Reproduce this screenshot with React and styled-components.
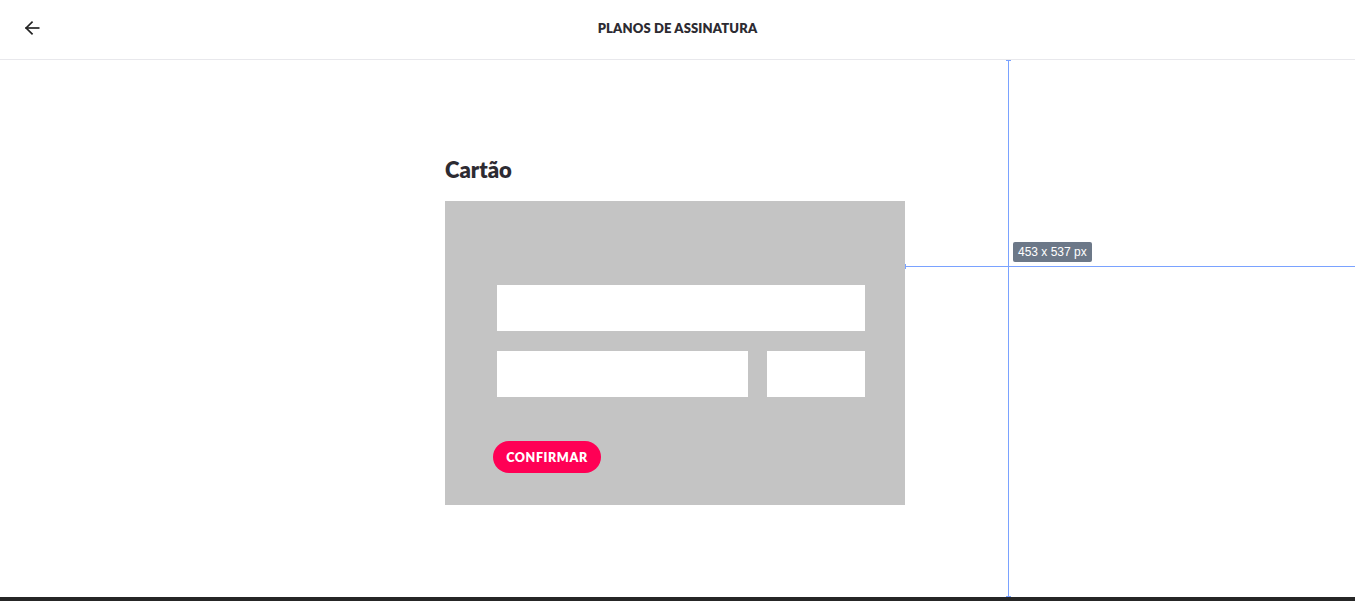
import React from 'react';
import styled, { createGlobalStyle } from 'styled-components';

const GlobalStyle = createGlobalStyle`
  html, body {
    margin: 0;
    padding: 0;
    background: #fff;
  }
  body {
    font-family: Lato, "Open Sans", sans-serif;
    color: #2d2b32;
  }
`;

// whole window
const Page = styled.div`
  position: relative;
  width: 1355px;
  height: 601px;
  display: flex;
  flex-direction: column;
  overflow: hidden;
`;

// topo com voltar + titulo
const Header = styled.header`
  height: 60px;
  box-sizing: border-box;
  padding-bottom: 3px;
  border-bottom: 1px solid #e8e8ec;
  display: grid;
  grid-template-columns: 64px 1fr 64px;
  align-items: center;
`;

const BackButton = styled.button`
  border: 0;
  background: none;
  padding: 0 0 0 22px;
  display: flex;
  align-items: center;
  cursor: pointer;
  color: #222;
`;

const Title = styled.h1`
  margin: 0;
  text-align: center;
  font-size: 13px;
  font-weight: 800;
  letter-spacing: 0.15px;
  color: #2d2b32;
`;

const Main = styled.main`
  flex: 1;
  display: flex;
  justify-content: center;
  padding-top: 98px;
  padding-right: 5px;
`;

const Section = styled.section`
  width: 460px;
`;

const Heading = styled.h2`
  margin: 0 0 19px;
  font-size: 22px;
  font-weight: 800;
  line-height: 24px;
  color: #2d2b32;
`;

const CardBox = styled.form`
  background: #c4c4c4;
  height: 304px;
  box-sizing: border-box;
  padding: 84px 40px 32px 48px;
  display: flex;
  flex-direction: column;
`;

const Fields = styled.div`
  padding-left: 4px;
  display: flex;
  flex-direction: column;
  gap: 20px;
`;

const Row = styled.div`
  display: flex;
  gap: 19px;
`;

const Field = styled.input`
  border: 0;
  outline: none;
  background: #fff;
  height: 46px;
  box-sizing: border-box;
  padding: 0 12px;
  min-width: 0;
  width: ${(p) => p.$w || '100%'};
  flex: ${(p) => (p.$grow ? '1 1 auto' : 'none')};
  font-family: inherit;
`;

const ConfirmButton = styled.button`
  margin-top: 44px;
  align-self: flex-start;
  height: 32px;
  width: 108px;
  border: 0;
  border-radius: 16px;
  background: #ff0055;
  color: #fff;
  font-family: Lato, sans-serif;
  font-weight: 800;
  font-size: 12.5px;
  letter-spacing: 0.6px;
  cursor: pointer;
`;

const Taskbar = styled.div`
  height: 4px;
  background: #262626;
`;

// regua de medida por cima da pagina
const GuideV = styled.div`
  position: absolute;
  left: 1008px;
  top: 60px;
  bottom: 4px;
  width: 1px;
  background: #7aa2ff;
  &::before, &::after {
    content: '';
    position: absolute;
    left: -2px;
    width: 5px;
    height: 1px;
    background: #7aa2ff;
  }
  &::before { top: 0; }
  &::after { bottom: 0; }
`;

const GuideH = styled.div`
  position: absolute;
  left: 905px;
  right: 0;
  top: 266px;
  height: 1px;
  background: #7aa2ff;
  &::before {
    content: '';
    position: absolute;
    left: 0;
    top: -2px;
    width: 1px;
    height: 5px;
    background: #7aa2ff;
  }
`;

const SizeTag = styled.div`
  position: absolute;
  left: 1013px;
  top: 242px;
  height: 20px;
  padding: 0 5px;
  border-radius: 2px;
  background: #6c7888;
  color: #fff;
  font-family: "Liberation Sans", Arial, sans-serif;
  font-size: 12px;
  line-height: 20px;
  white-space: nowrap;
`;

const ArrowLeft = () => (
  <svg width="20" height="20" viewBox="0 0 24 24" fill="none" stroke="currentColor" strokeWidth="2" strokeLinecap="square">
    <path d="M20 12H5" />
    <path d="M12 5l-7 7 7 7" />
  </svg>
);

export default function App() {
  return (
    <Page>
      <GlobalStyle />
      <Header>
        <BackButton aria-label="voltar">
          <ArrowLeft />
        </BackButton>
        <Title>PLANOS DE ASSINATURA</Title>
        <span />
      </Header>
      <Main>
        <Section>
          <Heading>Cartão</Heading>
          <CardBox onSubmit={(e) => e.preventDefault()}>
            <Fields>
              <Field type="text" />
              <Row>
                <Field type="text" $grow />
                <Field type="text" $w="98px" />
              </Row>
            </Fields>
            <ConfirmButton type="submit">CONFIRMAR</ConfirmButton>
          </CardBox>
        </Section>
      </Main>
      <Taskbar />
      <GuideV />
      <GuideH />
      <SizeTag>453 x 537 px</SizeTag>
    </Page>
  );
}
